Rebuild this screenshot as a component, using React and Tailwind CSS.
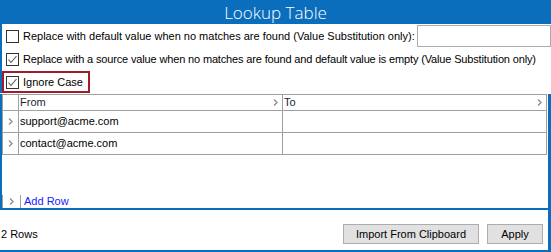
import React from "react";

const Checkbox = ({ checked }) => (
  <div className="w-[13px] h-[13px] border border-[#333333] bg-white shrink-0 flex items-center justify-center">
    {checked && (
      <svg width="11" height="11" viewBox="0 0 11 11">
        <polyline points="1.5,5.5 4,8.5 9.5,2" fill="none" stroke="#555555" strokeWidth="1.1" />
      </svg>
    )}
  </div>
);

const Chevron = () => (
  <svg width="5" height="7" viewBox="0 0 5 7" className="shrink-0">
    <polyline points="1,0.5 4,3.5 1,6.5" fill="none" stroke="#909090" strokeWidth="1.4" />
  </svg>
);

const rows = ["support@acme.com", "contact@acme.com"];

const App = () => {
  return (
    <div className="w-[551px] h-[252px] flex flex-col bg-white text-[11px] text-black font-['Liberation_Sans',Arial,sans-serif] overflow-hidden">
      {/* Title */}
      <div className="h-[24px] bg-[#0a6ebd] flex items-center justify-center text-white text-[17px] font-light font-['Open_Sans',sans-serif] leading-none">
        Lookup Table
      </div>

      {/* Options */}
      <div className="flex flex-col gap-[1px] pt-[1px] border-l-2 border-[#0a6ebd]">
        <div className="h-[22px] flex items-center">
          <div className="pl-[4px] flex items-center gap-[4px] whitespace-nowrap">
            <Checkbox checked={false} />
            <span>Replace with default value when no matches are found (Value Substitution only):</span>
          </div>
          <div className="ml-auto w-[134px] h-[22px] border border-[#ababab] bg-white shrink-0" />
        </div>
        <div className="h-[22px] flex items-center pl-[4px] gap-[4px] whitespace-nowrap">
          <Checkbox checked />
          <span className="tracking-[-0.15px]">
            Replace with a source value when no matches are found and default value is empty (Value Substitution only)
          </span>
        </div>
        <div className="h-[22px] flex">
          <div className="border-2 border-[#a01d2b] flex items-center gap-[4px] pl-[2px] pr-[5px]">
            <Checkbox checked />
            <span>Ignore Case</span>
          </div>
        </div>
      </div>

      {/* Grid */}
      <div className="mt-[1px] flex-1 flex flex-col border-l-2 border-r-[3px] border-[#0a6ebd]">
        <div className="border-t border-l border-r border-[#a0a0a0] mr-[1px]">
          <div className="h-[16px] flex border-b border-[#a0a0a0] text-[#1e1e38]">
            <div className="w-[16px] border-r border-[#a0a0a0]" />
            <div className="w-[264px] border-r border-[#a0a0a0] flex items-center pl-[1px] pr-[4px]">
              <span>From</span>
              <span className="ml-auto"><Chevron /></span>
            </div>
            <div className="flex-1 flex items-center pl-[1px] pr-[4px]">
              <span>To</span>
              <span className="ml-auto"><Chevron /></span>
            </div>
          </div>
          {rows.map((r) => (
            <div key={r} className="h-[22px] flex border-b border-[#a0a0a0]">
              <div className="w-[16px] border-r border-[#a0a0a0] flex items-center pl-[5px]">
                <Chevron />
              </div>
              <div className="w-[264px] border-r border-[#a0a0a0] flex items-center pl-[1px]">{r}</div>
              <div className="flex-1" />
            </div>
          ))}
        </div>
        <div className="flex-1 flex items-end">
          <div className="h-[13px] flex items-center">
            <div className="w-[19px] h-[13px] border-l border-r border-[#a0a0a0] flex items-center pl-[6px]">
              <Chevron />
            </div>
            <span className="ml-[3px] text-[#1a1aff]">Add Row</span>
          </div>
        </div>
      </div>

      {/* Footer */}
      <div className="h-[44px] border-t-2 border-b-2 border-r-[3px] border-[#0a6ebd] flex items-center pt-[8px] pr-[5px]">
        <span className="pl-[1px]">2 Rows</span>
        <div className="ml-auto flex gap-[8px]">
          <button className="w-[136px] h-[20px] bg-[#e1e1e1] border border-[#adadad] flex items-center justify-center">
            Import From Clipboard
          </button>
          <button className="w-[56px] h-[20px] bg-[#e1e1e1] border border-[#adadad] flex items-center justify-center">
            Apply
          </button>
        </div>
      </div>
    </div>
  );
};

export default App;
